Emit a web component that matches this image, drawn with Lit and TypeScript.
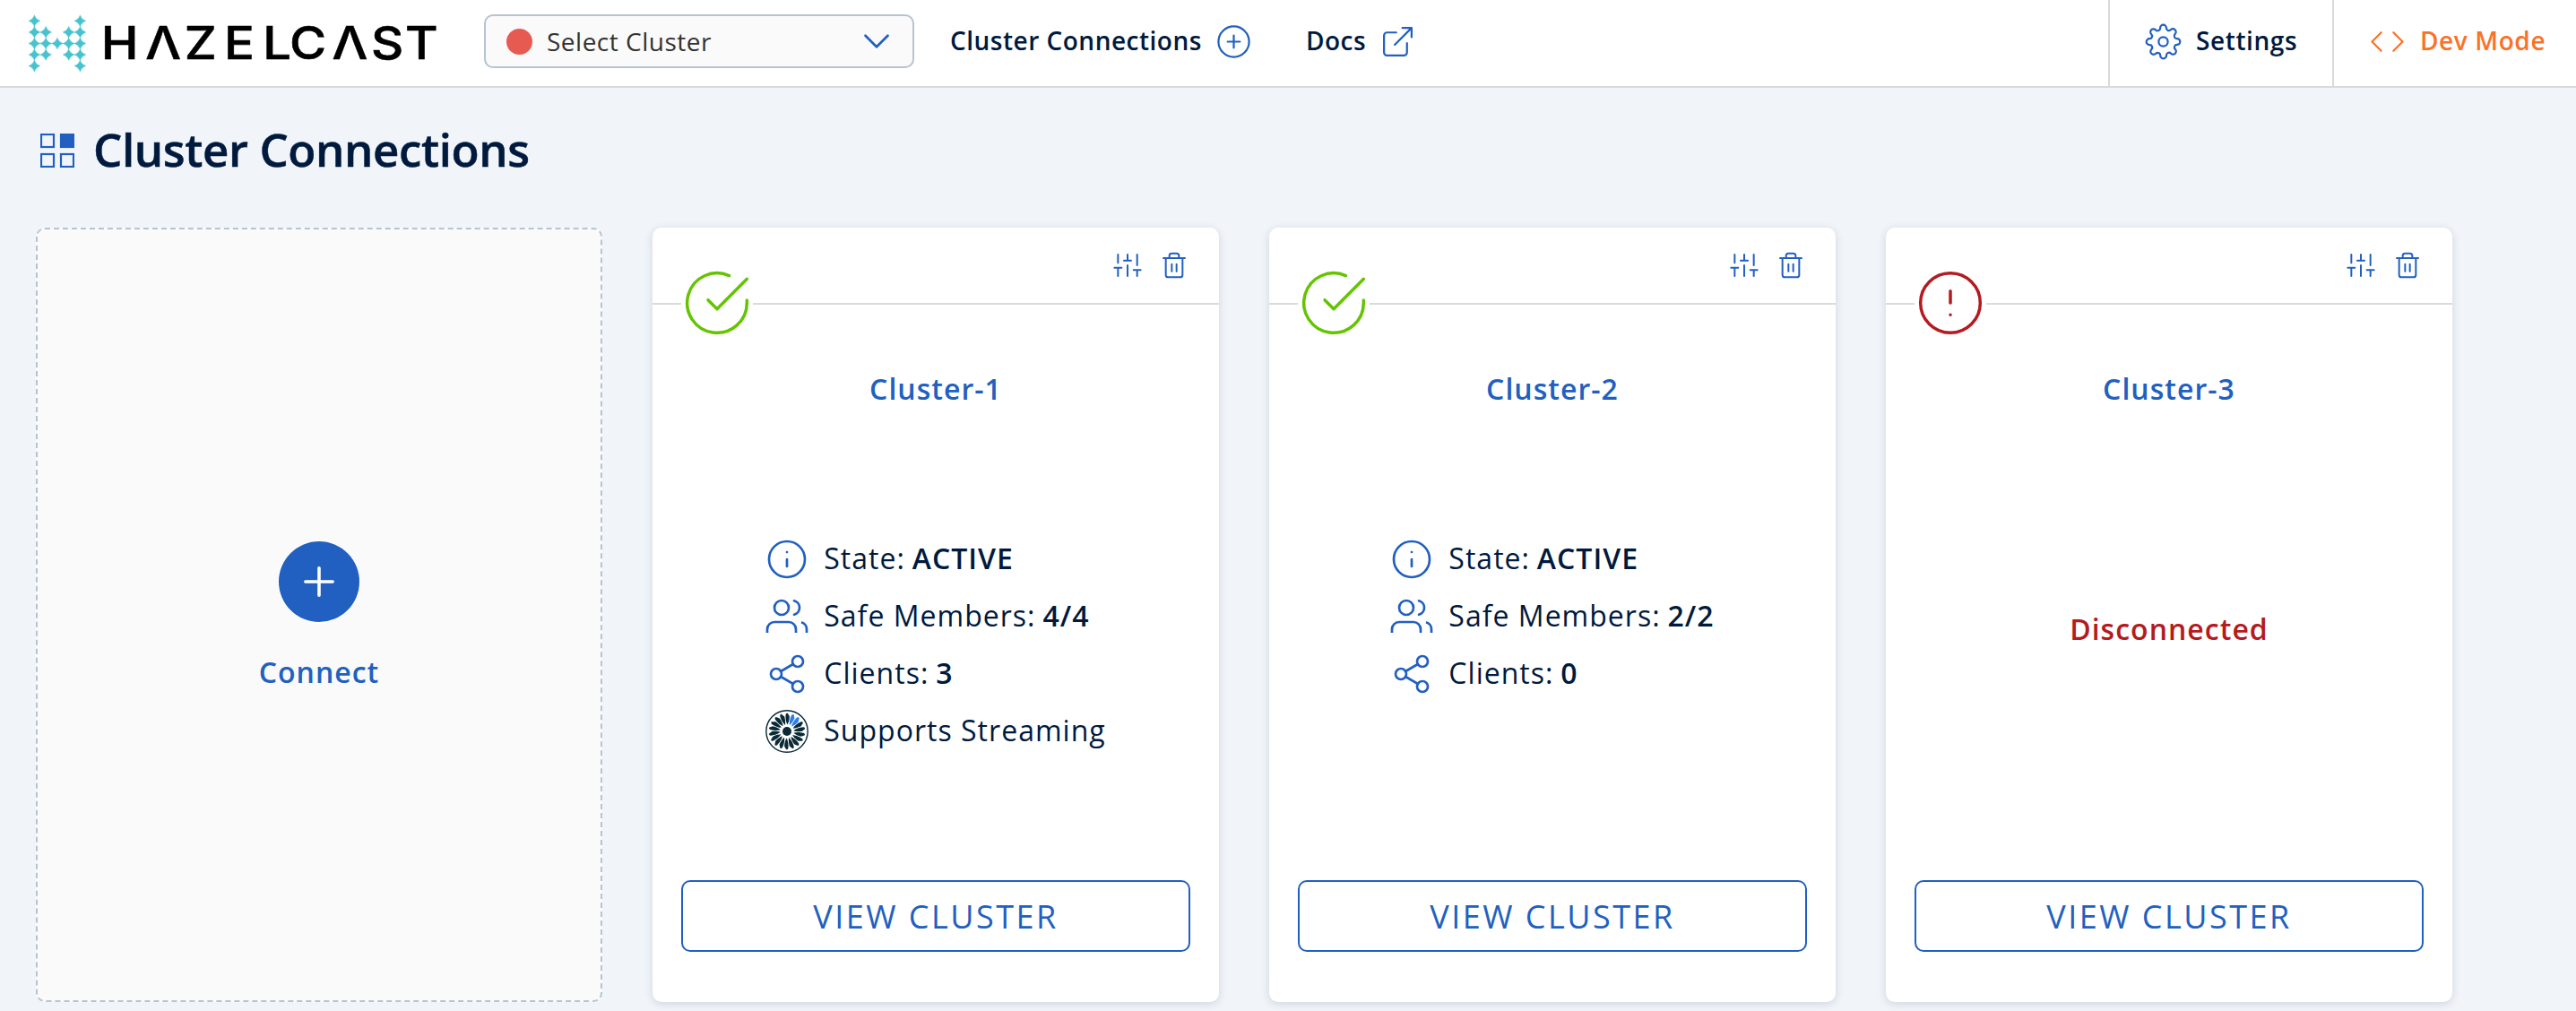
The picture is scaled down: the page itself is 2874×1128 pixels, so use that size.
import { LitElement, html, css, svg, nothing, type TemplateResult } from "lit";
import { customElement, property } from "lit/decorators.js";

const ICONS: Record<string, TemplateResult> = {
  plusCircle: svg`<circle cx="12" cy="12" r="10"/><path d="M12 8v8M8 12h8"/>`,
  plus: svg`<path d="M12 5v14M5 12h14"/>`,
  external: svg`<path d="M18 13v6a2 2 0 0 1-2 2H5a2 2 0 0 1-2-2V8a2 2 0 0 1 2-2h6"/><path d="M15 3h6v6M10 14 21 3"/>`,
  chevron: svg`<path d="m6 9 6 6 6-6"/>`,
  code: svg`<path d="m16 18 6-6-6-6M8 6l-6 6 6 6"/>`,
  settings: svg`<circle cx="12" cy="12" r="3"/><path d="M19.4 15a1.65 1.65 0 0 0 .33 1.82l.06.06a2 2 0 0 1 0 2.83 2 2 0 0 1-2.83 0l-.06-.06a1.65 1.65 0 0 0-1.82-.33 1.65 1.65 0 0 0-1 1.51V21a2 2 0 0 1-2 2 2 2 0 0 1-2-2v-.09A1.65 1.65 0 0 0 9 19.4a1.65 1.65 0 0 0-1.82.33l-.06.06a2 2 0 0 1-2.83 0 2 2 0 0 1 0-2.83l.06-.06a1.65 1.65 0 0 0 .33-1.82 1.65 1.65 0 0 0-1.51-1H3a2 2 0 0 1-2-2 2 2 0 0 1 2-2h.09A1.65 1.65 0 0 0 4.6 9a1.65 1.65 0 0 0-.33-1.82l-.06-.06a2 2 0 0 1 0-2.83 2 2 0 0 1 2.83 0l.06.06a1.65 1.65 0 0 0 1.82.33H9a1.65 1.65 0 0 0 1-1.51V3a2 2 0 0 1 2-2 2 2 0 0 1 2 2v.09a1.65 1.65 0 0 0 1 1.51 1.65 1.65 0 0 0 1.82-.33l.06-.06a2 2 0 0 1 2.83 0 2 2 0 0 1 0 2.83l-.06.06a1.65 1.65 0 0 0-.33 1.82V9a1.65 1.65 0 0 0 1.51 1H21a2 2 0 0 1 2 2 2 2 0 0 1-2 2h-.09a1.65 1.65 0 0 0-1.51 1z"/>`,
  sliders: svg`<path d="M4 21v-7M4 10V3M12 21v-9M12 8V3M20 21v-5M20 12V3M1 14h6M9 8h6M17 16h6"/>`,
  trash: svg`<path d="M3 6h18M19 6v14a2 2 0 0 1-2 2H7a2 2 0 0 1-2-2V6m3 0V4a2 2 0 0 1 2-2h4a2 2 0 0 1 2 2v2M10 11v6M14 11v6"/>`,
  check: svg`<path d="M22 11.08V12a10 10 0 1 1-5.93-9.14"/><path d="M22 4 12 14.01l-3-3"/>`,
  alert: svg`<circle cx="12" cy="12" r="10"/><path d="M12 8v4M12 16h.01"/>`,
  info: svg`<circle cx="12" cy="12" r="10"/><path d="M12 16v-4M12 8h.01"/>`,
  users: svg`<path stroke-linecap="butt" d="M17 21v-2a4 4 0 0 0-4-4H5a4 4 0 0 0-4 4v2"/><circle cx="9" cy="7" r="4"/><path stroke-linecap="butt" d="M23 21v-2a4 4 0 0 0-3-3.87"/><path d="M16 3.13a4 4 0 0 1 0 7.75"/>`,
  share: svg`<circle cx="18" cy="5" r="3"/><circle cx="6" cy="12" r="3"/><circle cx="18" cy="19" r="3"/><path d="m8.59 13.51 6.83 3.98M15.41 6.51l-6.82 3.98"/>`,
};

const icon = (name: string, cls: string) =>
  html`<svg class="icon ${cls}" viewBox="0 0 24 24" aria-hidden="true">${ICONS[name]}</svg>`;

const turbine = html`<svg class="turbine" viewBox="-24 -24 48 48" aria-hidden="true">
  <circle class="rim" r="23.2" />
  ${Array.from({ length: 18 }, (_, i) => svg`<path
    class=${i === 1 || i === 2 ? "blade lit" : "blade"}
    transform="rotate(${i * 20 + 4})"
    d="M0-7.4C-1.6-10-2.8-13-2.7-18.8-2.2-20.2-1.2-20.6-.4-20L1.8-16.6C1.8-12.6 1-9.5 0-7.4Z"/>`)}
  <circle class="core" r="5" />
</svg>`;

const STARS: [number, number[]][] = [
  [23.3, [0, 4]],
  [35.9, [0, 1, 3, 4]],
  [48.5, [0, 1, 2, 3, 4]],
  [61, [0, 1, 3, 4]],
  [73.6, [0, 4]],
];

const logo = html`<svg class="logo" viewBox="0 0 490 96" role="img" aria-label="Hazelcast">
  ${STARS.map(([y, cols]) => cols.map((c) => svg`<path class="star"
    transform="translate(${38.4 + c * 12.75} ${y})"
    d="M0-6.6Q1.6-1.6 6.6 0 1.6 1.6 0 6.6-1.6 1.6-6.6 0-1.6-1.6 0-6.6Z"/>`))}
  <text class="word" transform="scale(1.1 1)" y="66.3"
    x="102.4 147.4 187.1 227.2 266.7 293.7 336.9 376.3 411">HΛZELCΛST</text>
</svg>`;

interface Cluster {
  name: string;
  state?: string;
  members?: string;
  clients?: number;
  streaming?: boolean;
}

const CLUSTERS: Cluster[] = [
  { name: "Cluster-1", state: "ACTIVE", members: "4/4", clients: 3, streaming: true },
  { name: "Cluster-2", state: "ACTIVE", members: "2/2", clients: 0 },
  { name: "Cluster-3" },
];

const shared = css`
  * { box-sizing: border-box; }
  .icon {
    display: block;
    flex: none;
    fill: none;
    stroke: #2160c0;
    stroke-linecap: round;
    stroke-linejoin: round;
  }
`;

@customElement("cluster-card")
export class ClusterCard extends LitElement {
  @property({ attribute: false }) cluster!: Cluster;

  static styles = [shared, css`
    :host {
      display: flex;
      flex-direction: column;
      height: 864px;
      background: #fff;
      border-radius: 10px;
      box-shadow: 0 2px 10px rgba(30, 40, 60, 0.16);
    }
    .top {
      position: relative;
      flex: none;
      height: 86px;
      border-bottom: 2px solid #dadada;
      display: flex;
      justify-content: flex-end;
      gap: 20px;
      padding: 26px 34px 0 0;
    }
    .action { width: 32px; height: 32px; stroke-width: 1.5; }
    .status {
      position: absolute;
      left: 32px;
      top: 44px;
      width: 80px;
      height: 80px;
      background: #fff;
      stroke-width: 1.05;
    }
    .ok { stroke: #64c400; }
    .bad { stroke: #b41b20; }
    .name {
      margin-top: 72px;
      text-align: center;
      font-weight: 600;
      line-height: 44px;
      color: #2160c0;
    }
    .body {
      flex: 1;
      display: flex;
      justify-content: center;
      align-items: flex-start;
      padding-top: 144px;
    }
    .list { display: flex; flex-direction: column; gap: 16px; }
    .row { display: flex; align-items: center; gap: 17px; height: 48px; }
    .label { padding-bottom: 4px; white-space: pre; }
    .label b { margin-left: -1.5px; font-weight: 600; }
    .fact { width: 48px; height: 48px; stroke-width: 1.35; }
    .turbine { display: block; width: 48px; height: 48px; fill: #0b2a36; }
    .rim { fill: #fff; stroke: #0b2a36; stroke-width: 1.4; }
    .core { fill: #0b2a36; }
    .lit { fill: #2f7de8; }
    .down { margin-top: 80px; line-height: 44px; font-weight: 600; color: #b41b20; }
    .view {
      flex: none;
      height: 80px;
      margin: 0 32px 56px;
      border: 2px solid #2160c0;
      border-radius: 10px;
      background: #fff;
      color: #2160c0;
      font: 400 36px "Open Sans", sans-serif;
      letter-spacing: 2.5px;
      padding: 0;
    }
  `];

  render() {
    const c = this.cluster;
    const up = c.state !== undefined;
    return html`
      <div class="top">
        ${icon(up ? "check" : "alert", up ? "status ok" : "status bad")}
        ${icon("sliders", "action")}${icon("trash", "action")}
      </div>
      <div class="name">${c.name}</div>
      <div class="body">
        ${up
          ? html`<div class="list">
              <div class="row">${icon("info", "fact")}<span class="label">State: <b>${c.state}</b></span></div>
              <div class="row">${icon("users", "fact")}<span class="label">Safe Members: <b>${c.members}</b></span></div>
              <div class="row">${icon("share", "fact")}<span class="label">Clients: <b>${c.clients}</b></span></div>
              ${c.streaming ? html`<div class="row">${turbine}<span class="label">Supports Streaming</span></div>` : nothing}
            </div>`
          : html`<div class="down">Disconnected</div>`}
      </div>
      <button class="view">VIEW CLUSTER</button>
    `;
  }
}

@customElement("app-root")
export class AppRoot extends LitElement {
  static styles = [shared, css`
    :host {
      display: block;
      height: 1128px;
      overflow: hidden;
      background: #f1f5fa;
      color: #001a3e;
      font-family: "Open Sans", sans-serif;
    }
    .header {
      display: flex;
      height: 98px;
      background: #fff;
      border-bottom: 2px solid #dadada;
      font-size: 28px;
      font-weight: 600;
      letter-spacing: 0.5px;
    }
    .logo { display: block; flex: none; width: 490px; height: 96px; }
    .star { fill: #48c3ce; stroke: #48c3ce; stroke-width: 0.3; }
    .word { font: 500 51px Inter, sans-serif; fill: #000; stroke: #000; stroke-width: 0.6; }
    .select {
      display: flex;
      align-items: center;
      width: 480px;
      height: 60px;
      margin: 16px 0 0 50px;
      padding: 0 15px 0 23px;
      border: 2px solid #b6c3d0;
      border-radius: 10px;
      background: #fafafa;
      color: #333;
      font-weight: 400;
    }
    .dot { width: 29px; height: 29px; margin-right: 16px; border-radius: 50%; background: #e65a52; }
    .value { flex: 1; }
    .chevron { width: 50px; height: 50px; stroke-width: 1.3; }
    .item { display: flex; align-items: center; padding-bottom: 4px; gap: 15px; }
    .text { padding-bottom: 2px; white-space: nowrap; }
    .links { display: flex; gap: 60px; margin-left: 40px; flex: 1; }
    .nav { width: 41px; height: 41px; stroke-width: 1.3; }
    .cell { gap: 16px; border-left: 2px solid #dadada; padding-left: 39px; letter-spacing: 0.6px; }
    .settings { width: 250px; }
    .dev { width: 272px; color: #fa7228; }
    .dev .icon { stroke: #fa7228; }
    .heading { display: flex; align-items: center; height: 156px; padding: 0 0 16px 45px; }
    .grid { display: block; width: 38px; height: 38px; margin-right: 21px; }
    .tile { fill: none; stroke: #2160c0; stroke-width: 2.2; }
    .full { fill: #2160c0; }
    h1 { margin: 0; padding-bottom: 4px; font-size: 51px; font-weight: 600; letter-spacing: -0.4px; line-height: 70px; -webkit-text-stroke: 0.5px #001a3e; }
    .cards {
      display: grid;
      grid-template-columns: repeat(4, 632px);
      column-gap: 56px;
      padding-left: 40px;
      font-size: 32px;
      letter-spacing: 1.02px;
    }
    .connect {
      display: flex;
      flex-direction: column;
      align-items: center;
      height: 864px;
      padding-top: 348px;
      border: 2px dashed #b6c3d0;
      border-radius: 10px;
      background: #fafafa;
      color: #2160c0;
      font-weight: 600;
      line-height: 44px;
    }
    .round {
      display: flex;
      align-items: center;
      justify-content: center;
      width: 90px;
      height: 90px;
      margin-bottom: 34px;
      border-radius: 50%;
      background: #2160c0;
      box-shadow: 0 0 0 1px #fff;
    }
    .plus { width: 52px; height: 52px; stroke: #fff; stroke-width: 1.65; }
  `];

  render() {
    return html`
      <header class="header">
        ${logo}
        <div class="select">
          <span class="dot"></span><span class="value">Select Cluster</span>${icon("chevron", "chevron")}
        </div>
        <nav class="links">
          <div class="item"><span class="text">Cluster Connections</span>${icon("plusCircle", "nav")}</div>
          <div class="item"><span class="text">Docs</span>${icon("external", "nav")}</div>
        </nav>
        <div class="item cell settings">${icon("settings", "nav")}<span class="text">Settings</span></div>
        <div class="item cell dev">${icon("code", "nav")}<span class="text">Dev Mode</span></div>
      </header>
      <div class="heading">
        <svg class="grid" viewBox="0 0 38 38" aria-hidden="true">
          <rect class="tile" x="1" y="1" width="14" height="14" /><rect class="tile full" x="23" y="1" width="14" height="14" />
          <rect class="tile" x="1" y="23" width="14" height="14" /><rect class="tile" x="23" y="23" width="14" height="14" />
        </svg>
        <h1>Cluster Connections</h1>
      </div>
      <main class="cards">
        <div class="connect">
          <div class="round">${icon("plus", "plus")}</div>
          <span>Connect</span>
        </div>
        ${CLUSTERS.map((c) => html`<cluster-card .cluster=${c}></cluster-card>`)}
      </main>
    `;
  }
}
